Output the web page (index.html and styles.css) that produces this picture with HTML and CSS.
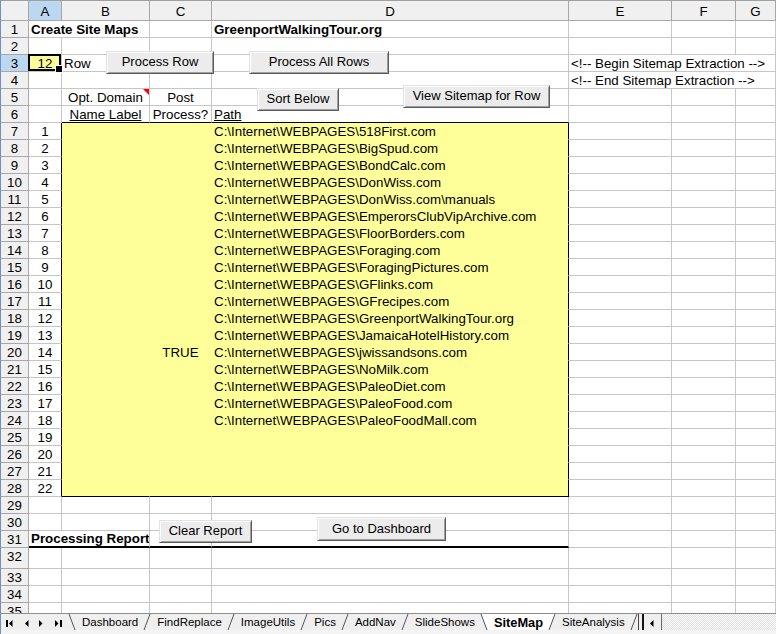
FILE: index.html
```html
<!DOCTYPE html>
<html lang="en">
<head>
<meta charset="utf-8">
<title>SiteMap</title>
<link rel="stylesheet" href="styles.css">
</head>
<body>
<div class="app">
  <div class="sheet">
    <div class="r hdr"><div></div><div class="hi">A</div><div>B</div><div>C</div><div>D</div><div>E</div><div>F</div><div>G</div></div>
    <div class="r"><div class="h">1</div><div class="s2 b">Create Site Maps</div><div></div><div class="b">GreenportWalkingTour.org</div><div></div><div></div><div></div></div>
    <div class="r"><div class="h">2</div><div></div><div></div><div></div><div></div><div></div><div></div><div></div></div>
    <div class="r"><div class="h hi">3</div><div class="sel">12</div><div>Row</div><div></div><div></div><div class="s3">&lt;!-- Begin Sitemap Extraction --&gt;</div></div>
    <div class="r"><div class="h">4</div><div></div><div></div><div></div><div></div><div class="s3">&lt;!-- End Sitemap Extraction --&gt;</div></div>
    <div class="r"><div class="h">5</div><div></div><div class="c note">Opt. Domain</div><div class="c">Post</div><div></div><div></div><div></div><div></div></div>
    <div class="r"><div class="h">6</div><div></div><div class="c tb"><span class="u">Name Label</span></div><div class="c tb">Process?</div><div class="tb"><span class="u">Path</span></div><div></div><div></div><div></div></div>
    <div class="r"><div class="h">7</div><div class="c ye">1</div><div class="y"></div><div class="y"></div><div class="y yr">C:\Internet\WEBPAGES\518First.com</div><div></div><div></div><div></div></div>
    <div class="r"><div class="h">8</div><div class="c ye">2</div><div class="y"></div><div class="y"></div><div class="y yr">C:\Internet\WEBPAGES\BigSpud.com</div><div></div><div></div><div></div></div>
    <div class="r"><div class="h">9</div><div class="c ye">3</div><div class="y"></div><div class="y"></div><div class="y yr">C:\Internet\WEBPAGES\BondCalc.com</div><div></div><div></div><div></div></div>
    <div class="r"><div class="h">10</div><div class="c ye">4</div><div class="y"></div><div class="y"></div><div class="y yr">C:\Internet\WEBPAGES\DonWiss.com</div><div></div><div></div><div></div></div>
    <div class="r"><div class="h">11</div><div class="c ye">5</div><div class="y"></div><div class="y"></div><div class="y yr">C:\Internet\WEBPAGES\DonWiss.com\manuals</div><div></div><div></div><div></div></div>
    <div class="r"><div class="h">12</div><div class="c ye">6</div><div class="y"></div><div class="y"></div><div class="y yr">C:\Internet\WEBPAGES\EmperorsClubVipArchive.com</div><div></div><div></div><div></div></div>
    <div class="r"><div class="h">13</div><div class="c ye">7</div><div class="y"></div><div class="y"></div><div class="y yr">C:\Internet\WEBPAGES\FloorBorders.com</div><div></div><div></div><div></div></div>
    <div class="r"><div class="h">14</div><div class="c ye">8</div><div class="y"></div><div class="y"></div><div class="y yr">C:\Internet\WEBPAGES\Foraging.com</div><div></div><div></div><div></div></div>
    <div class="r"><div class="h">15</div><div class="c ye">9</div><div class="y"></div><div class="y"></div><div class="y yr">C:\Internet\WEBPAGES\ForagingPictures.com</div><div></div><div></div><div></div></div>
    <div class="r"><div class="h">16</div><div class="c ye">10</div><div class="y"></div><div class="y"></div><div class="y yr">C:\Internet\WEBPAGES\GFlinks.com</div><div></div><div></div><div></div></div>
    <div class="r"><div class="h">17</div><div class="c ye">11</div><div class="y"></div><div class="y"></div><div class="y yr">C:\Internet\WEBPAGES\GFrecipes.com</div><div></div><div></div><div></div></div>
    <div class="r"><div class="h">18</div><div class="c ye">12</div><div class="y"></div><div class="y"></div><div class="y yr">C:\Internet\WEBPAGES\GreenportWalkingTour.org</div><div></div><div></div><div></div></div>
    <div class="r"><div class="h">19</div><div class="c ye">13</div><div class="y"></div><div class="y"></div><div class="y yr">C:\Internet\WEBPAGES\JamaicaHotelHistory.com</div><div></div><div></div><div></div></div>
    <div class="r"><div class="h">20</div><div class="c ye">14</div><div class="y"></div><div class="y c">TRUE</div><div class="y yr">C:\Internet\WEBPAGES\jwissandsons.com</div><div></div><div></div><div></div></div>
    <div class="r"><div class="h">21</div><div class="c ye">15</div><div class="y"></div><div class="y"></div><div class="y yr">C:\Internet\WEBPAGES\NoMilk.com</div><div></div><div></div><div></div></div>
    <div class="r"><div class="h">22</div><div class="c ye">16</div><div class="y"></div><div class="y"></div><div class="y yr">C:\Internet\WEBPAGES\PaleoDiet.com</div><div></div><div></div><div></div></div>
    <div class="r"><div class="h">23</div><div class="c ye">17</div><div class="y"></div><div class="y"></div><div class="y yr">C:\Internet\WEBPAGES\PaleoFood.com</div><div></div><div></div><div></div></div>
    <div class="r"><div class="h">24</div><div class="c ye">18</div><div class="y"></div><div class="y"></div><div class="y yr">C:\Internet\WEBPAGES\PaleoFoodMall.com</div><div></div><div></div><div></div></div>
    <div class="r"><div class="h">25</div><div class="c ye">19</div><div class="y"></div><div class="y"></div><div class="y yr"></div><div></div><div></div><div></div></div>
    <div class="r"><div class="h">26</div><div class="c ye">20</div><div class="y"></div><div class="y"></div><div class="y yr"></div><div></div><div></div><div></div></div>
    <div class="r"><div class="h">27</div><div class="c ye">21</div><div class="y"></div><div class="y"></div><div class="y yr"></div><div></div><div></div><div></div></div>
    <div class="r"><div class="h">28</div><div class="c ye">22</div><div class="y yb"></div><div class="y yb"></div><div class="y yr yb"></div><div></div><div></div><div></div></div>
    <div class="r"><div class="h">29</div><div></div><div></div><div></div><div></div><div></div><div></div><div></div></div>
    <div class="r"><div class="h">30</div><div></div><div></div><div></div><div></div><div></div><div></div><div></div></div>
    <div class="r"><div class="h">31</div><div class="s2 b thick">Processing Report</div><div class="thick"></div><div class="thick"></div><div></div><div></div><div></div></div>
    <div class="r tall"><div class="h">32</div><div></div><div></div><div></div><div></div><div></div><div></div><div></div></div>
    <div class="r"><div class="h">33</div><div></div><div></div><div></div><div></div><div></div><div></div><div></div></div>
    <div class="r"><div class="h">34</div><div></div><div></div><div></div><div></div><div></div><div></div><div></div></div>
    <div class="r"><div class="h">35</div><div></div><div></div><div></div><div></div><div></div><div></div><div></div></div>

    <button class="btn btn-row">Process Row</button>
    <button class="btn btn-all">Process All Rows</button>
    <button class="btn btn-sort">Sort Below</button>
    <button class="btn btn-view">View Sitemap for Row</button>
    <button class="btn btn-clear">Clear Report</button>
    <button class="btn btn-dash">Go to Dashboard</button>
  </div>

  <div class="tabbar">
    <div class="nav">
      <svg width="67" height="16" viewBox="0 0 67 16">
        <rect x="5" y="6" width="2" height="7"/>
        <polygon points="11.5,6 11.5,13 8,9.5"/>
        <polygon points="27.5,6 27.5,13 24,9.5"/>
        <polygon points="38,6 38,13 41.5,9.5"/>
        <polygon points="54,6 54,13 57.5,9.5"/>
        <rect x="59" y="6" width="2" height="7"/>
      </svg>
    </div>
    <svg class="sl" viewBox="0 0 8 16"><line x1="1" y1="0" x2="7" y2="16"/></svg>
    <span class="tab">Dashboard</span>
    <svg class="sl" viewBox="0 0 8 16"><line x1="1" y1="16" x2="7" y2="0"/></svg>
    <span class="tab">FindReplace</span>
    <svg class="sl" viewBox="0 0 8 16"><line x1="1" y1="16" x2="7" y2="0"/></svg>
    <span class="tab">ImageUtils</span>
    <svg class="sl" viewBox="0 0 8 16"><line x1="1" y1="16" x2="7" y2="0"/></svg>
    <span class="tab">Pics</span>
    <svg class="sl" viewBox="0 0 8 16"><line x1="1" y1="16" x2="7" y2="0"/></svg>
    <span class="tab">AddNav</span>
    <svg class="sl" viewBox="0 0 8 16"><line x1="1" y1="16" x2="7" y2="0"/></svg>
    <span class="tab">SlideShows</span>
    <svg class="sl" viewBox="0 0 8 16"><polygon class="fill" points="1,0 8,0 8,16 7,16"/><line x1="1" y1="0" x2="7" y2="16"/></svg>
    <span class="tab on">SiteMap</span>
    <svg class="sl" viewBox="0 0 8 16"><polygon class="fill" points="0,0 7,0 1,16 0,16"/><line x1="1" y1="16" x2="7" y2="0"/></svg>
    <span class="tab">SiteAnalysis</span>
    <svg class="sl" viewBox="0 0 8 16"><line x1="1" y1="16" x2="7" y2="0"/></svg>
    <div class="hscroll">
      <div class="split"></div>
      <div class="sbtn">
        <svg width="6" height="16" viewBox="0 0 6 16"><polygon points="4.5,6 4.5,13 1,9.5"/></svg>
      </div>
      <div class="track"></div>
    </div>
  </div>
</div>
</body>
</html>
```
FILE: styles.css
```css
* { box-sizing: border-box; }
html, body { margin: 0; padding: 0; background: #fff; }
body { width: 776px; height: 634px; overflow: hidden; }

.app {
  width: 776px;
  height: 634px;
  border-left: 1px solid #7090c4;
  display: flex;
  flex-direction: column;
}

.sheet {
  position: relative;
  flex: none;
  height: 613px;
  overflow: hidden;
  font: 13.33px/16px "Liberation Sans", Arial, sans-serif;
  color: #000;
}

.r {
  display: grid;
  grid-template-columns: 28px 33px 88px 62px 357px 103px 64px 40px;
  height: 17px;
}
.r > div {
  border-right: 1px solid #c6c6c6;
  border-bottom: 1px solid #c6c6c6;
  padding: 1px 2px 0;
  line-height: 15px;
  white-space: nowrap;
  overflow: hidden;
}
.r > .h {
  background: #f0f0f0;
  border-color: #a8a8a8;
  text-align: center;
  padding: 1px 0 0;
}
.r.tall { height: 21px; }

.hdr { height: 21px; border-top: 1px solid #a0a0a0; }
.r.hdr > div {
  background: #f0f0f0;
  border-color: #a8a8a8;
  text-align: center;
  padding: 3px 0 0;
  line-height: 16px;
}
.r > .hi, .r.hdr > .hi { background: #bcd8f1; }

.s2 { grid-column: span 2; }
.s3 { grid-column: span 3; }
.b { font-weight: bold; }
.r > .c { text-align: center; }
.u { text-decoration: underline; text-underline-offset: 1px; }

.r > .sel {
  position: relative;
  overflow: visible;
  background: #ffff99;
  text-align: center;
}
.sel::before {
  content: "";
  position: absolute;
  left: -1px;
  top: -1px;
  right: 0;
  bottom: 0;
  border: 2px solid #000;
}
.sel::after {
  content: "";
  position: absolute;
  right: -2px;
  bottom: -2px;
  width: 6px;
  height: 6px;
  background: #000;
  border: 1px solid #fff;
}

.r > .note { position: relative; }
.note::after {
  content: "";
  position: absolute;
  top: 0;
  right: 0;
  border-top: 6px solid #ff0000;
  border-left: 6px solid transparent;
}

.r > .tb { border-bottom-color: #000; }
.r > .ye { border-right-color: #000; }
.r > .y {
  background: #ffff99;
  border-right-color: #ffff99;
  border-bottom-color: #ffff99;
}
.r > .yr { border-right-color: #000; }
.r > .yb { border-bottom-color: #000; }
.r > .thick { border-bottom: 2px solid #000; line-height: 14px; }

.btn {
  position: absolute;
  margin: 0;
  padding: 0 0 1px;
  font: 13px/16px "Liberation Sans", Arial, sans-serif;
  color: #000;
  background: #ececec;
  border: 1px solid;
  border-color: #e2e2e2 #5a5a5a #5a5a5a #e2e2e2;
  box-shadow: inset 1px 1px 0 #fdfdfd, inset -1px -1px 0 #a0a0a0;
  height: 23px;
  white-space: nowrap;
}
.btn-row   { left: 105px; top: 51px; width: 108px; }
.btn-all   { left: 248px; top: 51px; width: 140px; }
.btn-sort  { left: 256px; top: 88px; width: 82px; }
.btn-view  { left: 402px; top: 85px; width: 147px; }
.btn-clear { left: 158px; top: 520px; width: 93px; }
.btn-dash  { left: 316px; top: 517px; width: 129px; height: 24px; }

.tabbar {
  flex: none;
  height: 21px;
  display: flex;
  background: #efefef;
  border-top: 1px solid #8e8e8e;
  border-bottom: 4px solid #f4f4f4;
  font: 11.5px/17px "Liberation Sans", Arial, sans-serif;
  color: #000;
}
.nav { width: 67px; flex: none; }
.nav svg { display: block; fill: #000; }

.sl { display: block; flex: none; width: 8px; height: 16px; }
.sl line { stroke: #555; stroke-width: 1; }
.sl .fill { fill: #fff; }

.tab { flex: none; padding: 0 5px 0 6px; white-space: nowrap; }
.tab.on { background: #fff; font-weight: bold; font-size: 12.8px; }

.hscroll { margin-left: auto; width: 139px; display: flex; flex: none; }
.split { width: 1px; background: #444; margin-right: 3px; }
.sbtn {
  width: 20px;
  border-left: 2px solid #111;
  border-right: 1px solid #6a6a6a;
  display: flex;
  justify-content: center;
  background: #efefef;
}
.sbtn svg { display: block; fill: #000; }
.track {
  flex: 1;
  background: repeating-conic-gradient(#e2e2e2 0 25%, #fafafa 0 50%) 0 0 / 2px 2px;
}
```
